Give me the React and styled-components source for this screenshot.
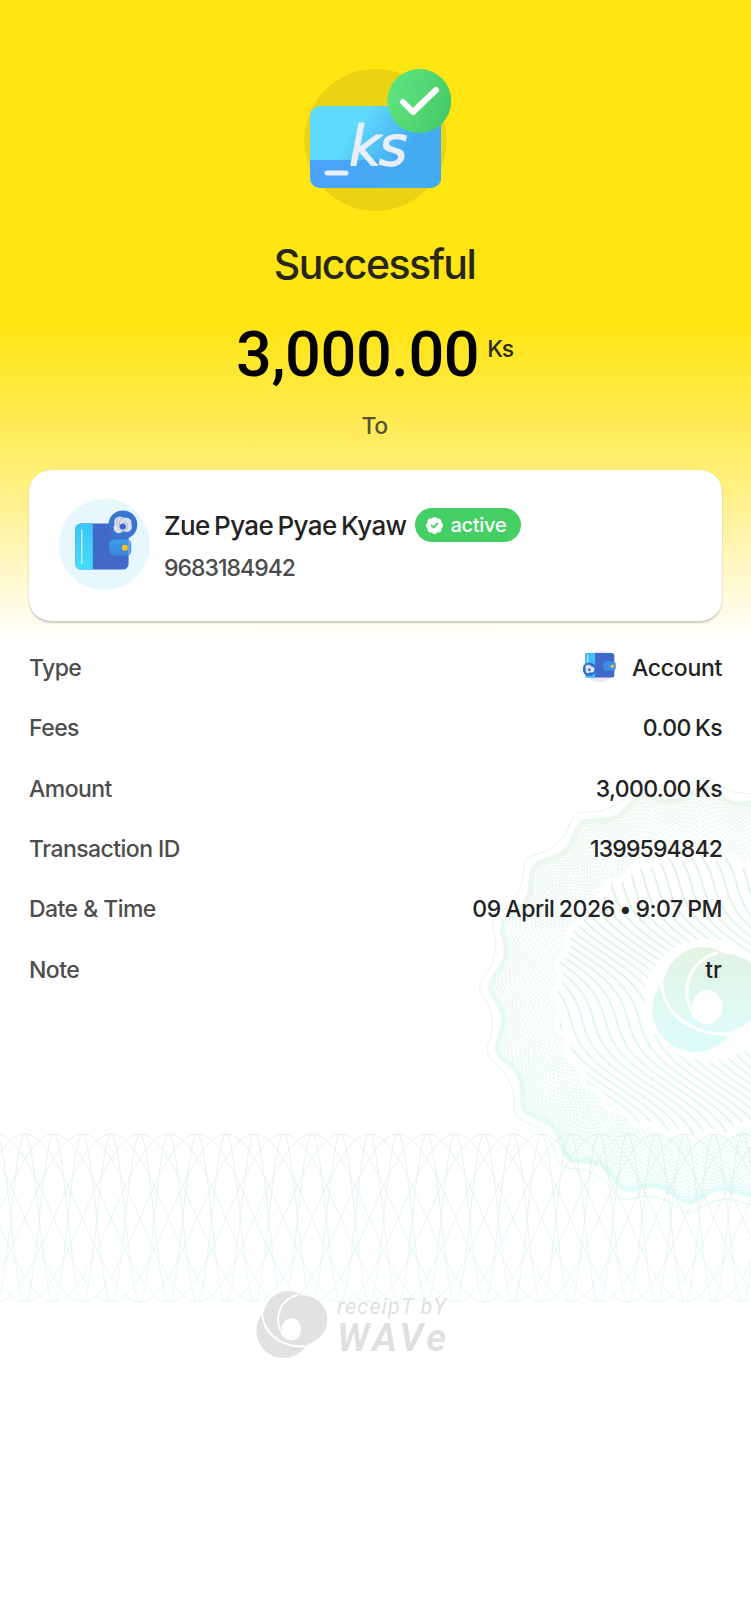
import React from 'react'
import styled, { createGlobalStyle } from 'styled-components'
import { BadgeCheck } from 'lucide-react'

const rows = [
    { label: 'Type', value: 'Account', icon: true, track: -0.3 },
    { label: 'Fees', value: '0.00 Ks', track: -0.6 },
    { label: 'Amount', value: '3,000.00 Ks', track: -0.65 },
    { label: 'Transaction ID', value: '1399594842', track: -0.85 },
    { label: 'Date & Time', value: '09 April 2026 • 9:07 PM', track: -0.45 },
    { label: 'Note', value: 'tr', track: 0 },
]

const CX = 697
const CY = 995

const outline = (radius, amp, count, phase) => {
    const points = []
    for (let i = 0; i <= 720; i++) {
        const a = (i / 720) * Math.PI * 2
        const n = count * a + phase
        const r = radius + amp * Math.cos(n + 0.4 * Math.sin(n))
        points.push(`${(CX + r * Math.cos(a)).toFixed(1)} ${(CY + r * Math.sin(a)).toFixed(1)}`)
    }
    return `M${points.join('L')}Z`
}

// one family of threads, turning by `twist` between the outer and the inner edge
const threads = (count, twist) => {
    let d = ''
    for (let j = 0; j < count; j++) {
        const start = (j / count) * Math.PI * 2
        for (let s = 0; s <= 12; s++) {
            const t = s / 12
            const a = start + twist * t
            const outer = 203 + 6 * Math.cos(20 * a - 0.82)
            const inner = 144 + 3 * Math.cos(28 * a)
            const r = outer + (inner - outer) * t ** 1.3
            d += `${s ? 'L' : 'M'}${(CX + r * Math.cos(a)).toFixed(1)} ${(CY + r * Math.sin(a)).toFixed(1)}`
        }
    }
    return d
}

const ripples = () => {
    let d = ''
    for (let k = -26; k < 26; k++) {
        for (let y = 840; y <= 1144; y += 4) {
            const x = CX + k * 11.4 + 0.88 * (y - CY) - 13 * Math.sin(((y - 1020) / 135) * Math.PI * 2)
            d += `${y === 840 ? 'M' : 'L'}${x.toFixed(1)} ${y}`
        }
    }
    return d
}

const lattice = (half) => {
    let d = ''
    for (let x0 = 25 - 28.7 * 8; x0 < 980; x0 += 28.7) {
        [1, -1].forEach((dir) => {
            for (let s = 0; s <= 24; s++) {
                const t = s / 24
                const x = x0 + dir * half * t
                const y = 1218 - 84 * Math.cos(t * Math.PI)
                d += `${s ? 'L' : 'M'}${x.toFixed(1)} ${y.toFixed(1)}`
            }
        })
    }
    return d
}

function Petals({ fill }) {
    return (
        <g fill={fill}>
            <circle cx="83" cy="119" r="82" />
            <ellipse cx="97" cy="84" rx="77" ry="84" />
            <ellipse cx="141" cy="86" rx="73" ry="73" />
            <g fill="none" stroke="#fff" strokeWidth="6">
                <path d="M18 66C20 122 72 172 150 166" />
                <path d="M126 11C70 24 48 88 84 136" />
            </g>
            <ellipse cx="106" cy="115" rx="29" ry="33" fill="#fff" />
        </g>
    )
}

function Guilloche() {
    return (
        <Backdrop viewBox="0 0 751 1600" fill="none">
            <defs>
                <linearGradient id="ring" x1="0" y1="780" x2="0" y2="1200" gradientUnits="userSpaceOnUse">
                    <stop offset="0" stopColor="#cfead2" />
                    <stop offset="0.5" stopColor="#c8efde" />
                    <stop offset="1" stopColor="#b4f7ee" />
                </linearGradient>
                <linearGradient id="band" x1="0" y1="1134" x2="0" y2="1302" gradientUnits="userSpaceOnUse">
                    <stop offset="0" stopColor="#cfe6d4" />
                    <stop offset="1" stopColor="#cdf7ef" />
                </linearGradient>
                <linearGradient id="mark" x1="0" y1="0" x2="0" y2="200" gradientUnits="userSpaceOnUse">
                    <stop offset="0" stopColor="#e2f3e3" />
                    <stop offset="0.75" stopColor="#dffbf7" />
                    <stop offset="1" stopColor="#dcfaf6" />
                </linearGradient>
                <linearGradient id="ripple" x1="590" y1="900" x2="680" y2="1060" spreadMethod="reflect" gradientUnits="userSpaceOnUse">
                    <stop offset="0" stopColor="#e1f1e4" />
                    <stop offset="1" stopColor="#e0faf6" />
                </linearGradient>
                <clipPath id="core"><path d={outline(138, 3, 28, 0)} /></clipPath>
            </defs>
            <path d={outline(212, 5.5, 20, -0.82)} stroke="url(#ring)" strokeWidth="0.8" opacity="0.7" />
            <path d={outline(201, 6, 20, -0.82)} stroke="url(#ring)" strokeWidth="5" opacity="0.2" />
            <g stroke="url(#ring)" strokeWidth="0.6" opacity="0.55">
                <path d={threads(180, 0.5)} />
                <path d={threads(180, -0.5)} />
            </g>
            <g clipPath="url(#core)">
                <path d={ripples()} stroke="url(#ripple)" strokeWidth="2" />
                <ellipse cx="708" cy="1000" rx="64" ry="61" fill="#fff" />
            </g>
            <g transform="translate(652 947) scale(0.523)">
                <Petals fill="url(#mark)" />
            </g>
            <g stroke="url(#band)" strokeWidth="0.8" opacity="0.65">
                <path d={lattice(114.8)} />
                <path d={lattice(28.7)} />
            </g>
        </Backdrop>
    )
}

function MoneyIcon() {
    return (
        <svg width="160" height="144" viewBox="0 0 160 144">
            <defs>
                <linearGradient id="sheet" x1="0.1" y1="0.2" x2="0.75" y2="0.5">
                    <stop offset="0.35" stopColor="#5fdafb" />
                    <stop offset="1" stopColor="#44aaf2" />
                </linearGradient>
                <linearGradient id="strip" x1="0" y1="0" x2="1" y2="0">
                    <stop offset="0" stopColor="#4ba2fd" />
                    <stop offset="0.6" stopColor="#44aaf2" />
                </linearGradient>
                <linearGradient id="tick" x1="0" y1="0.3" x2="1" y2="0.7">
                    <stop offset="0" stopColor="#5fe57f" />
                    <stop offset="1" stopColor="#45c966" />
                </linearGradient>
                <clipPath id="card"><rect x="15" y="38" width="131" height="82" rx="10" /></clipPath>
            </defs>
            <circle cx="80.5" cy="72" r="71" fill="#ead312" />
            <g clipPath="url(#card)">
                <rect x="14" y="38" width="132" height="83" fill="url(#sheet)" />
                <rect x="14" y="92" width="132" height="29" fill="url(#strip)" />
            </g>
            <path d="M32 105h19" stroke="#eaf0fb" strokeWidth="5" strokeLinecap="round" />
            <Ks x="54" y="97">ks</Ks>
            <circle cx="124.3" cy="33" r="32" fill="url(#tick)" />
            <path d="M108 34l10 10L141 22" fill="none" stroke="#fff" strokeWidth="6" strokeLinecap="round" strokeLinejoin="round" />
        </svg>
    )
}

function WalletAvatar() {
    return (
        <svg width="91" height="91" viewBox="26 29 272 272">
            <defs>
                <linearGradient id="flap" x1="0" y1="0" x2="0" y2="1">
                    <stop offset="0" stopColor="#3aa0e8" />
                    <stop offset="1" stopColor="#3d83dc" />
                </linearGradient>
                <linearGradient id="spine" x1="0" y1="0" x2="0" y2="1">
                    <stop offset="0" stopColor="#3cc4f7" />
                    <stop offset="1" stopColor="#48dcfb" />
                </linearGradient>
            </defs>
            <circle cx="162" cy="165" r="136" fill="#e6f7fe" />
            <rect x="75" y="102" width="159" height="138" rx="17" fill="#4169c9" />
            <path d="M127 102H92a17 17 0 0 0-17 17v104a17 17 0 0 0 17 17h35z" fill="url(#spine)" />
            <path d="M94 122v100" stroke="#c9f3fd" strokeWidth="4" strokeLinecap="round" />
            <circle cx="217" cy="106" r="43" fill="#3a74cf" />
            <rect x="176" y="150" width="66" height="48" rx="14" fill="url(#flap)" />
            <path d="M236 157v34" stroke="#7da4e4" strokeWidth="6" strokeLinecap="round" />
            <circle cx="223" cy="175" r="9" fill="#fbc40f" />
            <g fill="#dbe0ee">
                <circle cx="208" cy="98" r="17" />
                <circle cx="226" cy="101" r="17" />
                <circle cx="228" cy="112" r="16" />
                <circle cx="205" cy="115" r="16" />
            </g>
            <g fill="none" stroke="#8d9dc8" strokeWidth="2">
                <path d="M203 84q-10 18 6 34q8 8 18 10" />
                <path d="M215 86q-14 12-5 30" />
                <path d="M218 98q14-2 13 14q-1 8-10 12" />
            </g>
            <circle cx="217" cy="111" r="9" fill="#3a63c4" />
        </svg>
    )
}

function SmallWallet() {
    return (
        <svg width="33" height="33" viewBox="39 27 98 98">
            <circle cx="88" cy="76" r="47" fill="#eee9f5" />
            <rect x="45" y="36" width="87" height="73" rx="8" fill="#3f68cb" />
            <path d="M75 36H54a9 9 0 0 0-9 9v55a9 9 0 0 0 9 9h21z" fill="#46bdf3" />
            <path d="M53 43v26" stroke="#c9f3fd" strokeWidth="3" strokeLinecap="round" />
            <rect x="99" y="61" width="37" height="27" rx="8" fill="#3a8ee3" />
            <circle cx="126" cy="75" r="5" fill="#f3c62e" />
            <circle cx="58" cy="84" r="20" fill="#2f73c9" />
            <circle cx="55" cy="80" r="9" fill="#dfe5f6" />
            <circle cx="64" cy="85" r="9" fill="#dfe5f6" />
            <circle cx="54" cy="89" r="7" fill="#dfe5f6" />
            <circle cx="58" cy="86" r="4" fill="#3a63c4" />
        </svg>
    )
}

function App() {
    return (
        <Page>
            <GlobalStyle />
            <Guilloche />
            <Content>
                <Hero>
                    <MoneyIcon />
                    <Title>Successful</Title>
                    <Total>
                        3,000.00<Currency>Ks</Currency>
                    </Total>
                    <Direction>To</Direction>
                </Hero>
                <Recipient>
                    <WalletAvatar />
                    <Info>
                        <NameLine>
                            <Name>Zue Pyae Pyae Kyaw</Name>
                            <Status>
                                <BadgeCheck size={23} fill="#fff" stroke="#43cf63" strokeWidth={2} />
                                active
                            </Status>
                        </NameLine>
                        <Phone>9683184942</Phone>
                    </Info>
                </Recipient>
                <Details>
                    {rows.map((row) => (
                        <Row key={row.label}>
                            <Label>{row.label}</Label>
                            <Value $track={row.track}>
                                {row.icon && <SmallWallet />}
                                {row.value}
                            </Value>
                        </Row>
                    ))}
                </Details>
                <Footer>
                    <svg width="72" height="68" viewBox="0 0 216 204">
                        <Petals fill="#e2e2e2" />
                    </svg>
                    <Brand>
                        <small>receipT bY</small>
                        <strong>WAVe</strong>
                    </Brand>
                </Footer>
            </Content>
        </Page>
    )
}

const GlobalStyle = createGlobalStyle`
    * {
        box-sizing: border-box;
    }
    body {
        margin: 0;
        background: #fff;
        font-family: Inter, 'Liberation Sans', sans-serif;
    }
`

const Page = styled.div`
    position: relative;
    width: 751px;
    height: 1600px;
    overflow: hidden;
    background: linear-gradient(#ffe512 0, #ffe512 322px, #ffee74 470px, #fff 640px);
`

const Backdrop = styled.svg`
    position: absolute;
    inset: 0;
    width: 751px;
    height: 1600px;
`

const Content = styled.main`
    position: relative;
    padding: 68px 29px 0;
`

const Hero = styled.header`
    display: flex;
    flex-direction: column;
    align-items: center;
    padding-right: 2px;
`

const Ks = styled.text`
    font: italic 55px 'DejaVu Sans', sans-serif;
    letter-spacing: -2px;
    fill: #e8effb;
    stroke: #e8effb;
    stroke-width: 1.2px;
    stroke-linejoin: round;
`

const Title = styled.h1`
    margin: 27px 0 0;
    font-size: 41px;
    font-weight: 500;
    line-height: 50px;
    letter-spacing: -1.6px;
    color: #27261c;
`

const Total = styled.div`
    display: flex;
    align-items: flex-start;
    margin-top: 31px;
    font-family: Roboto, sans-serif;
    font-size: 63px;
    font-weight: 500;
    line-height: 70px;
    letter-spacing: -0.4px;
    color: #000;
`

const Currency = styled.sup`
    margin: 15px 0 0 8px;
    font-family: Inter, sans-serif;
    font-size: 23px;
    font-weight: 500;
    line-height: 28px;
    letter-spacing: -1.2px;
    color: #2d2b1c;
`

const Direction = styled.div`
    margin-top: 22px;
    font-size: 23px;
    font-weight: 500;
    line-height: 28px;
    letter-spacing: -0.5px;
    color: #565339;
`

const Recipient = styled.section`
    display: flex;
    align-items: flex-start;
    gap: 14px;
    height: 151px;
    margin-top: 30px;
    padding: 29px 30px;
    border-radius: 22px;
    background: #fff;
    box-shadow: 0 2px 2px rgba(0, 0, 0, 0.2), 0 0 2px rgba(0, 0, 0, 0.06);
`

const Info = styled.div`
    padding-top: 9px;
`

const NameLine = styled.div`
    display: flex;
    align-items: center;
    gap: 8px;
`

const Name = styled.span`
    font-size: 26px;
    font-weight: 500;
    letter-spacing: -0.6px;
    word-spacing: -2px;
    color: #232323;
`

const Status = styled.span`
    display: flex;
    align-items: center;
    gap: 5px;
    height: 34px;
    padding: 0 15px 0 8px;
    border-radius: 17px;
    background: #43cf63;
    color: #fff;
    font-size: 20px;
    font-weight: 500;
    letter-spacing: -0.3px;
`

const Phone = styled.div`
    margin-top: 12px;
    font-size: 23px;
    font-weight: 500;
    line-height: 28px;
    letter-spacing: -0.97px;
    color: #4b4b4b;
`

const Details = styled.div`
    margin-top: 17px;
`

const Row = styled.div`
    display: flex;
    align-items: center;
    justify-content: space-between;
    height: 60.3px;
    font-size: 23px;
    font-weight: 500;
`

const Label = styled.span`
    letter-spacing: -0.55px;
    color: #4d4d4d;
`

const Value = styled.span`
    display: flex;
    align-items: center;
    gap: 16px;
    letter-spacing: ${(props) => props.$track}px;
    word-spacing: -1.2px;
    color: #222;

    svg {
        margin-bottom: 3px;
    }
`

const Footer = styled.footer`
    display: flex;
    align-items: flex-start;
    gap: 9px;
    margin-top: 291px;
    padding-left: 227px;
`

const Brand = styled.div`
    display: flex;
    flex-direction: column;
    padding-top: 3px;
    font-family: Roboto, sans-serif;
    font-style: italic;
    color: #e0e0e0;

    small {
        font-size: 21.5px;
        line-height: 26px;
        letter-spacing: 1.2px;
    }

    strong {
        font-size: 38px;
        font-weight: 600;
        line-height: 36px;
        letter-spacing: 3.8px;
    }
`

export default App
